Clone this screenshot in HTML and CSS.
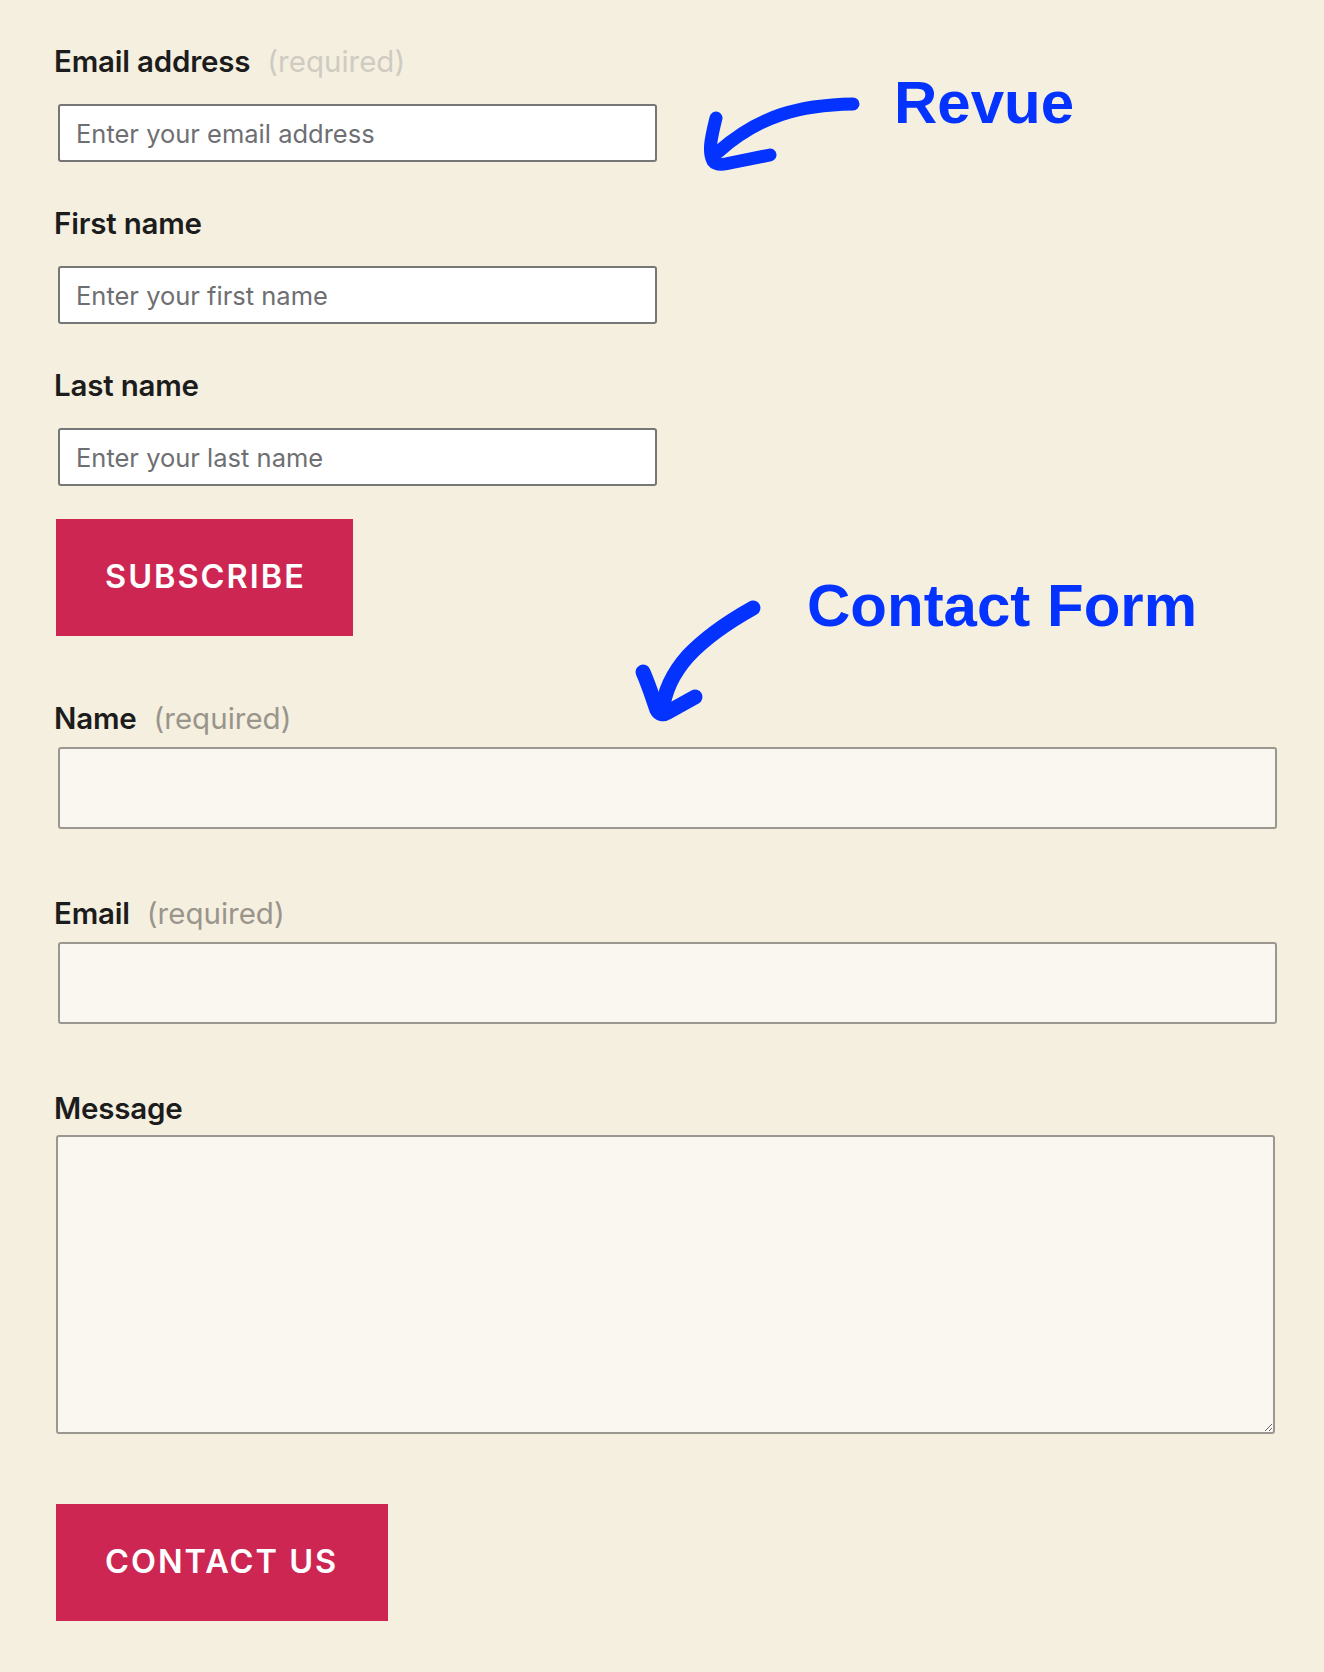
FILE: index.html
```html
<!DOCTYPE html>
<html lang="en">
<head>
<meta charset="utf-8">
<title>Forms</title>
<link rel="stylesheet" href="styles.css">
</head>
<body>
<div class="page">
  <form class="newsletter">
    <div class="field">
      <label class="label">Email address<span class="req req-light">(required)</span></label>
      <input class="text-in text-white" type="email" placeholder="Enter your email address">
    </div>
    <div class="field">
      <label class="label">First name</label>
      <input class="text-in text-white" type="text" placeholder="Enter your first name">
    </div>
    <div class="field">
      <label class="label">Last name</label>
      <input class="text-in text-white" type="text" placeholder="Enter your last name">
    </div>
    <button class="btn" type="button">Subscribe</button>
  </form>

  <form class="contact">
    <div class="cfield">
      <label class="label">Name<span class="req">(required)</span></label>
      <input class="text-in text-cream" type="text">
    </div>
    <div class="cfield">
      <label class="label">Email<span class="req">(required)</span></label>
      <input class="text-in text-cream" type="email">
    </div>
    <div class="cfield cfield-msg">
      <label class="label">Message</label>
      <textarea class="msg"></textarea>
    </div>
    <button class="btn btn-wide" type="button">Contact Us</button>
  </form>

  <svg class="arrows" width="1324" height="1672" viewBox="0 0 1324 1672">
    <g fill="none" stroke="#0433ff" stroke-linecap="round" stroke-linejoin="round">
      <path stroke-width="13" d="M853,104 C800,105 760,115 718,152"/>
      <path stroke-width="13" d="M716,118 C711,138 708,152 713,161 C716,165 722,165 730,163 L770,155"/>
      <path stroke-width="15" d="M753,608 C728,622 705,638 688,656 C672,674 664,692 662,712"/>
      <path stroke-width="15" d="M643,672 C650,688 654,702 657,710 C659,714 663,715 668,712 L695,697"/>
    </g>
  </svg>
  <div class="note note-revue">Revue</div>
  <div class="note note-contact">Contact Form</div>
</div>
</body>
</html>
```

FILE: styles.css
```css
html, body {
  margin: 0;
  padding: 0;
  background: #f5efe0;
}

.page {
  position: relative;
  width: 1324px;
  min-height: 1672px;
  box-sizing: border-box;
  padding: 44px 0 0 56px;
  font-family: Inter, "Noto Sans", sans-serif;
  color: #1c1c1c;
}

form {
  margin: 0;
}

.label {
  display: block;
  margin-left: -2px;
  font-size: 29.5px;
  line-height: 34px;
  font-weight: 600;
  letter-spacing: -0.2px;
  color: #1c1c1c;
}

.req {
  margin-left: 17px;
  font-weight: 400;
  letter-spacing: 0;
  color: #99958b;
}

.req-light {
  color: #cfcbc1;
}

.field {
  display: flex;
  flex-direction: column;
  align-items: flex-start;
  margin-bottom: 44px;
}

.field .label {
  margin-bottom: 26px;
}

.text-in {
  box-sizing: border-box;
  margin: 0 0 0 2px;
  font-family: Inter, "Noto Sans", sans-serif;
  font-size: 25.5px;
  color: #1c1c1c;
  border-radius: 3px;
  outline: none;
}

.text-white {
  width: 599px;
  height: 58px;
  padding: 0 16px;
  background: #ffffff;
  border: 2px solid #767676;
}

.text-white::placeholder {
  color: #6e6f73;
  opacity: 1;
}

.cfield {
  display: flex;
  flex-direction: column;
  align-items: flex-start;
  margin-bottom: 67px;
}

.cfield-msg {
  margin-bottom: 70px;
}

.cfield .label {
  margin-bottom: 12px;
}

.text-cream {
  width: 1219px;
  height: 82px;
  padding: 0 16px;
  background: #faf7f0;
  border: 2px solid #9a9790;
}

.msg {
  display: block;
  box-sizing: border-box;
  width: 1219px;
  height: 299px;
  margin: -2px 0 0 0;
  padding: 16px;
  font-family: Inter, "Noto Sans", sans-serif;
  font-size: 24px;
  background: #faf7f0;
  border: 2px solid #9a9790;
  border-radius: 3px;
  outline: none;
}

.btn {
  display: block;
  margin: 0;
  padding: 40px 47px 41px 49px;
  border: none;
  border-radius: 0;
  background: #cd2653;
  color: #ffffff;
  font-family: Inter, "Noto Sans", sans-serif;
  font-size: 32.5px;
  line-height: 36px;
  font-weight: 600;
  letter-spacing: 2px;
  text-transform: uppercase;
}

.btn-wide {
  padding-right: 50px;
}

.newsletter .btn {
  margin-top: -11px;
  margin-bottom: 65px;
}

.arrows {
  position: absolute;
  left: 0;
  top: 0;
  pointer-events: none;
}

.note {
  position: absolute;
  font-family: "Liberation Sans", Arial, sans-serif;
  font-weight: 700;
  font-size: 60px;
  line-height: 60px;
  color: #0433ff;
  white-space: nowrap;
}

.note-revue {
  left: 894px;
  top: 73px;
}

.note-contact {
  left: 807px;
  top: 576px;
}
```
